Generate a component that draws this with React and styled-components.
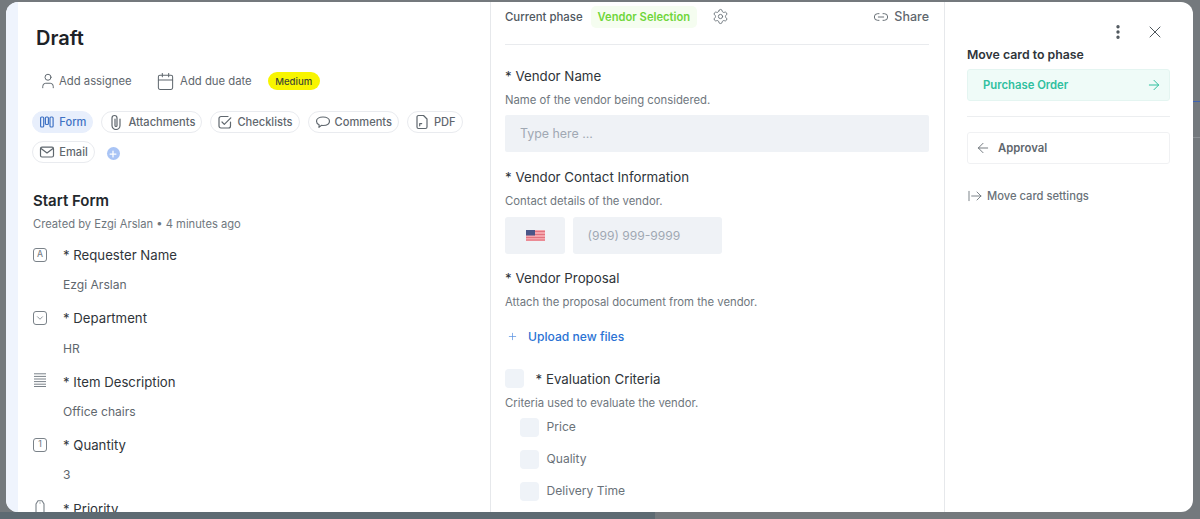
import React from "react";
import styled, { createGlobalStyle } from "styled-components";
import {
  ArrowLeft,
  ArrowRight,
  ArrowRightFromLine,
  Calendar,
  ChevronDown,
  EllipsisVertical,
  Link2,
  Plus,
  Settings,
  User,
  X,
} from "lucide-react";

const GlobalStyle = createGlobalStyle`
  html, body {
    margin: 0;
    padding: 0;
    height: 100%;
    overflow: hidden;
    background: #74797d;
    font-family: Inter, "Noto Sans", "Liberation Sans", sans-serif;
    -webkit-font-smoothing: antialiased;
  }
  * { box-sizing: border-box; }
`;

const Page = styled.div`
  position: relative;
  width: 1200px;
  height: 519px;
  padding-top: 2px;
  display: flex;
  flex-direction: column;
  background: #74797d;
  overflow: hidden;
`;

const Modal = styled.div`
  height: 510px;
  margin: 0 7px 0 6px;
  display: flex;
  flex: none;
  background: #fff;
  border-radius: 12px;
  overflow: hidden;
`;

const BottomBar = styled.div`
  flex: 1;
  display: flex;
`;

const BottomThumb = styled.div`
  width: 655px;
  background: #5d6a72;
`;

const SideMark = styled.div`
  position: absolute;
  right: 0;
  top: ${(p) => p.$top}px;
  width: 7px;
  height: 1px;
  background: ${(p) => p.$color};
`;

const Stripe = styled.div`
  width: 12px;
  flex: none;
  background: #eff4fd;
`;

const LeftColumn = styled.div`
  width: 473px;
  flex: none;
  padding: 0 14px 0 15px;
  border-right: 1px solid #e6e8eb;
  overflow: hidden;
`;

const Title = styled.h1`
  margin: 24px 0 0 3px;
  font-size: 20px;
  line-height: 24px;
  font-weight: 600;
  color: #1d2227;
`;

const MetaRow = styled.div`
  display: flex;
  align-items: center;
  height: 20px;
  margin: 21px 0 0 5.5px;
  font-size: 11.3px;
  color: #5f676e;
`;

const MetaItem = styled.span`
  display: flex;
  align-items: center;
  gap: ${(p) => p.$gap}px;
  margin-right: ${(p) => p.$after}px;
  svg { color: #5f676e; }
`;

const PriorityBadge = styled.span`
  height: 18px;
  padding: 0 7.5px;
  display: flex;
  align-items: center;
  border-radius: 9px;
  background: #f8f500;
  color: #3f4a33;
  font-size: 9.6px;
  font-weight: 500;
`;

const Tabs = styled.div`
  display: flex;
  flex-wrap: wrap;
  align-items: center;
  gap: 8px;
  margin: 20px 0 0 -0.7px;
`;

const Tab = styled.span`
  height: 22px;
  padding: 0 6px;
  display: flex;
  align-items: center;
  gap: 4px;
  border-radius: 11px;
  border: 1px solid ${(p) => (p.$active ? "#e8effc" : "#e9ebef")};
  background: ${(p) => (p.$active ? "#e8effc" : "#fff")};
  color: ${(p) => (p.$active ? "#3f72c4" : "#5f676e")};
  font-size: 11.1px;
  font-weight: 500;
  white-space: nowrap;
`;

const TabIcon = styled.svg.attrs({
  width: 16,
  height: 16,
  viewBox: "0 0 16 16",
  fill: "none",
  stroke: "currentColor",
  strokeWidth: 1.2,
  strokeLinecap: "round",
  strokeLinejoin: "round",
})`
  flex: none;
`;

const AddTab = styled.span`
  width: 13px;
  height: 13px;
  margin: 3px 0 0 4px;
  display: flex;
  align-items: center;
  justify-content: center;
  border-radius: 50%;
  background: #a9c4f5;
  color: #fff;
`;

const SectionTitle = styled.h2`
  margin: 28px 0 0;
  font-size: 15px;
  line-height: 20px;
  font-weight: 600;
  color: #23282d;
`;

const CreatedBy = styled.div`
  margin-top: 5px;
  font-size: 11.2px;
  line-height: 16px;
  color: #6f777e;
`;

const FieldList = styled.div`
  margin-top: 14px;
`;

const FieldRow = styled.div`
  display: grid;
  grid-template-columns: 30px 1fr;
  height: 63.4px;
`;

const FieldIcon = styled.div`
  height: 18px;
  display: flex;
  align-items: flex-start;
  color: #7a8289;
`;

const TypeBox = styled.span`
  width: 14px;
  height: 14px;
  margin-top: 1.5px;
  display: flex;
  align-items: center;
  justify-content: center;
  border: 1.2px solid #7a8289;
  border-radius: 3px;
  font-size: 8.5px;
  line-height: 1;
  font-weight: 500;
  color: #7a8289;
`;

const FieldLabel = styled.div`
  font-size: 13.2px;
  line-height: 18px;
  color: #2f353a;
`;

const FieldValue = styled.div`
  margin-top: 13.2px;
  font-size: 12.1px;
  line-height: 16px;
  color: #5f676e;
`;

const MiddleColumn = styled.div`
  width: 454px;
  flex: none;
  padding: 0 15px 0 14px;
  border-right: 1px solid #e6e8eb;
  overflow: hidden;
`;

const PhaseBar = styled.div`
  height: 43px;
  padding-bottom: 13px;
  display: flex;
  align-items: center;
  border-bottom: 1px solid #e9ebee;
`;

const PhaseLabel = styled.span`
  font-size: 11.4px;
  font-weight: 500;
  color: #50585f;
`;

const PhaseBadge = styled.span`
  height: 22px;
  margin-left: 8px;
  padding: 0 7px;
  display: flex;
  align-items: center;
  border-radius: 5px;
  background: #f5fdf0;
  color: #6fd63a;
  font-size: 11.2px;
  font-weight: 600;
`;

const PhaseGear = styled.span`
  margin-left: 15px;
  display: flex;
  color: #6a7279;
`;

const ShareLink = styled.span`
  margin-left: auto;
  display: flex;
  align-items: center;
  gap: 5px;
  color: #5f676e;
  font-size: 12.5px;
  font-weight: 500;
`;

const FormLabel = styled.div`
  margin-top: ${(p) => p.$top}px;
  font-size: 13.3px;
  line-height: 18px;
  color: #2f353a;
`;

const FormHint = styled.div`
  margin-top: 7.4px;
  font-size: 11.3px;
  line-height: 16px;
  color: #6f777e;
`;

const TextField = styled.div`
  height: 37px;
  margin-top: 7px;
  padding-left: 15px;
  display: flex;
  align-items: center;
  background: #eff2f6;
  border-radius: 2px;
  color: #a0a8b3;
  font-size: 12.4px;
`;

const PhoneRow = styled.div`
  display: flex;
  gap: 7.5px;
  margin-top: 7.4px;
`;

const FlagField = styled(TextField)`
  width: 60px;
  margin-top: 0;
  padding: 0;
  justify-content: center;
  border-radius: 3px;
`;

const PhoneField = styled(TextField)`
  width: 149.5px;
  margin-top: 0;
  border-radius: 3px;
  font-size: 12.1px;
`;

const UploadLink = styled.div`
  height: 18px;
  margin-top: 17px;
  display: flex;
  align-items: center;
  gap: 10px;
  padding-left: 2px;
  color: #2a72d4;
  font-size: 12.1px;
  font-weight: 500;
  svg { color: #5a93e2; }
`;

const CheckBox = styled.span`
  width: 18.5px;
  height: 18.5px;
  flex: none;
  background: #eff3f8;
  border-radius: 4px;
`;

const CheckHeading = styled.div`
  margin-top: 24px;
  display: flex;
  align-items: center;
  gap: 12px;
  font-size: 13.3px;
  color: #2f353a;
`;

const OptionList = styled.div`
  margin-top: 0.3px;
  padding-left: 15px;
`;

const Option = styled.div`
  height: 32px;
  display: flex;
  align-items: center;
  gap: 8px;
  font-size: 12.1px;
  color: #6a7279;
`;

const OptionText = styled.span`
  margin-top: -3px;
`;

const RightColumn = styled.div`
  flex: 1;
  padding: 0 23px 0 22px;
`;

const TopActions = styled.div`
  height: 24px;
  margin-top: 18px;
  display: flex;
  align-items: center;
  justify-content: flex-end;
  gap: 18px;
  padding-right: 5px;
  color: #4d555b;
`;

const MoveHeading = styled.div`
  margin-top: 3px;
  font-size: 12.3px;
  line-height: 16px;
  font-weight: 600;
  color: #2f353a;
`;

const NextPhase = styled.div`
  height: 32px;
  margin-top: 6px;
  padding: 0 7px 0 15px;
  display: flex;
  align-items: center;
  justify-content: space-between;
  background: #effbf8;
  border: 1px solid #e4f5f1;
  border-radius: 3px;
  color: #2fc09f;
  font-size: 11.3px;
  font-weight: 600;
`;

const Divider = styled.div`
  height: 1px;
  margin-top: 15px;
  background: #eceef0;
`;

const PrevPhase = styled.div`
  height: 32px;
  margin-top: 15px;
  padding-left: 7px;
  display: flex;
  align-items: center;
  gap: 7px;
  border: 1px solid #f0f1f3;
  border-radius: 3px;
  color: #5f676e;
  font-size: 11.3px;
  font-weight: 600;
`;

const SettingsLink = styled.div`
  margin-top: 24px;
  display: flex;
  align-items: center;
  gap: 4px;
  color: #6a7279;
  font-size: 11.2px;
  font-weight: 500;
`;

const LinesIcon = () => (
  <svg width="14" height="14" viewBox="0 0 14 14" stroke="currentColor" strokeWidth="1">
    <path d="M1 .8h12M1 3.4h12M1 6h12M1 8.6h12M1 11.2h12M1 13.5h12" />
  </svg>
);

const TagIcon = () => (
  <svg width="14" height="16" viewBox="0 0 14 16" fill="none" stroke="currentColor" strokeWidth="1.1">
    <path d="M3 4l2-3.2h4L11 4v11H3z" />
    <path d="M7 2.6v.8" />
  </svg>
);

const UsFlag = () => (
  <svg width="19" height="11" viewBox="0 0 19 11">
    <rect width="19" height="11" fill="#f5a5ac" />
    <path d="M0 1.5h19M0 4.5h19M0 7.5h19M0 10h19" stroke="#e2737f" strokeWidth="1" />
    <rect width="9" height="5.5" fill="#4a5688" />
  </svg>
);

const tabs = [
  {
    label: "Form",
    active: true,
    icon: (
      <>
        <rect x="1.6" y="3" width="3.1" height="10" rx="1" />
        <rect x="6.4" y="3" width="3" height="7.5" rx="1" />
        <rect x="11" y="3" width="3.1" height="10" rx="1" />
      </>
    ),
  },
  {
    label: "Attachments",
    icon: <path d="M12 5v6.5a4 4 0 0 1-8 0V4a2.5 2.5 0 0 1 5 0v7.5a1 1 0 0 1-2 0V5" />,
  },
  {
    label: "Checklists",
    icon: (
      <>
        <path d="M13.5 8v4a2 2 0 0 1-2 2H4a2 2 0 0 1-2-2V4.5a2 2 0 0 1 2-2h7" />
        <path d="M5 8l2.3 2.3L13.8 3.8" />
      </>
    ),
  },
  {
    label: "Comments",
    icon: (
      <path d="M8 3c3.7 0 6.5 1.7 6.5 4.3S11.7 11.5 8 11.5c-.6 0-1.1 0-1.6-.1L4 13.3l.1-2.6C2.5 10 1.5 8.8 1.5 7.3 1.5 4.7 4.3 3 8 3z" />
    ),
  },
  {
    label: "PDF",
    icon: (
      <>
        <path d="M4.5 1.5h5l3.5 3.5v8a1.5 1.5 0 0 1-1.5 1.5h-7A1.5 1.5 0 0 1 3 13V3a1.5 1.5 0 0 1 1.5-1.5z" />
        <path d="M5.7 11.8V9.6h2" />
      </>
    ),
  },
  {
    label: "Email",
    icon: (
      <>
        <rect x="1.5" y="3.2" width="13" height="9.8" rx="1.5" />
        <path d="M2 4.5l6 4.5 6-4.5" />
      </>
    ),
  },
];

const fields = [
  { label: "* Requester Name", value: "Ezgi Arslan", icon: <TypeBox>A</TypeBox> },
  { label: "* Department", value: "HR", icon: <TypeBox><ChevronDown size={10} /></TypeBox> },
  { label: "* Item Description", value: "Office chairs", icon: <LinesIcon /> },
  { label: "* Quantity", value: "3", icon: <TypeBox>1</TypeBox> },
  { label: "* Priority", icon: <TagIcon /> },
];

export default function App() {
  return (
    <>
      <GlobalStyle />
      <Page>
        <SideMark $top={101} $color="#3d62b4" />
        <SideMark $top={137} $color="#8b9094" />
        <Modal>
          <Stripe />
          <LeftColumn>
            <Title>Draft</Title>
            <MetaRow>
              <MetaItem $gap={2.5} $after={24.5}>
                <User size={18} strokeWidth={1.3} />
                Add assignee
              </MetaItem>
              <MetaItem $gap={5} $after={16}>
                <Calendar size={19} strokeWidth={1.3} />
                Add due date
              </MetaItem>
              <PriorityBadge>Medium</PriorityBadge>
            </MetaRow>
            <Tabs>
              {tabs.map((t) => (
                <Tab key={t.label} $active={t.active}>
                  <TabIcon>{t.icon}</TabIcon>
                  {t.label}
                </Tab>
              ))}
              <AddTab>
                <Plus size={10} strokeWidth={3} />
              </AddTab>
            </Tabs>
            <SectionTitle>Start Form</SectionTitle>
            <CreatedBy>Created by Ezgi Arslan • 4 minutes ago</CreatedBy>
            <FieldList>
              {fields.map((f) => (
                <FieldRow key={f.label}>
                  <FieldIcon>{f.icon}</FieldIcon>
                  <div>
                    <FieldLabel>{f.label}</FieldLabel>
                    {f.value && <FieldValue>{f.value}</FieldValue>}
                  </div>
                </FieldRow>
              ))}
            </FieldList>
          </LeftColumn>
          <MiddleColumn>
            <PhaseBar>
              <PhaseLabel>Current phase</PhaseLabel>
              <PhaseBadge>Vendor Selection</PhaseBadge>
              <PhaseGear>
                <Settings size={17} strokeWidth={1.3} />
              </PhaseGear>
              <ShareLink>
                <Link2 size={16} strokeWidth={1.4} />
                Share
              </ShareLink>
            </PhaseBar>
            <FormLabel $top={22}>* Vendor Name</FormLabel>
            <FormHint>Name of the vendor being considered.</FormHint>
            <TextField>Type here ...</TextField>
            <FormLabel $top={15.4}>* Vendor Contact Information</FormLabel>
            <FormHint>Contact details of the vendor.</FormHint>
            <PhoneRow>
              <FlagField>
                <UsFlag />
              </FlagField>
              <PhoneField>(999) 999-9999</PhoneField>
            </PhoneRow>
            <FormLabel $top={15.4}>* Vendor Proposal</FormLabel>
            <FormHint>Attach the proposal document from the vendor.</FormHint>
            <UploadLink>
              <Plus size={11} strokeWidth={1.6} />
              Upload new files
            </UploadLink>
            <CheckHeading>
              <CheckBox />
              * Evaluation Criteria
            </CheckHeading>
            <FormHint>Criteria used to evaluate the vendor.</FormHint>
            <OptionList>
              <Option><CheckBox /><OptionText>Price</OptionText></Option>
              <Option><CheckBox /><OptionText>Quality</OptionText></Option>
              <Option><CheckBox /><OptionText>Delivery Time</OptionText></Option>
            </OptionList>
          </MiddleColumn>
          <RightColumn>
            <TopActions>
              <EllipsisVertical size={18} strokeWidth={2.5} />
              <X size={20} strokeWidth={1.2} />
            </TopActions>
            <MoveHeading>Move card to phase</MoveHeading>
            <NextPhase>
              Purchase Order
              <ArrowRight size={16} strokeWidth={1.5} />
            </NextPhase>
            <Divider />
            <PrevPhase>
              <ArrowLeft size={16} strokeWidth={1.3} />
              Approval
            </PrevPhase>
            <SettingsLink>
              <ArrowRightFromLine size={16} strokeWidth={1.3} />
              Move card settings
            </SettingsLink>
          </RightColumn>
        </Modal>
        <BottomBar>
          <BottomThumb />
        </BottomBar>
      </Page>
    </>
  );
}
